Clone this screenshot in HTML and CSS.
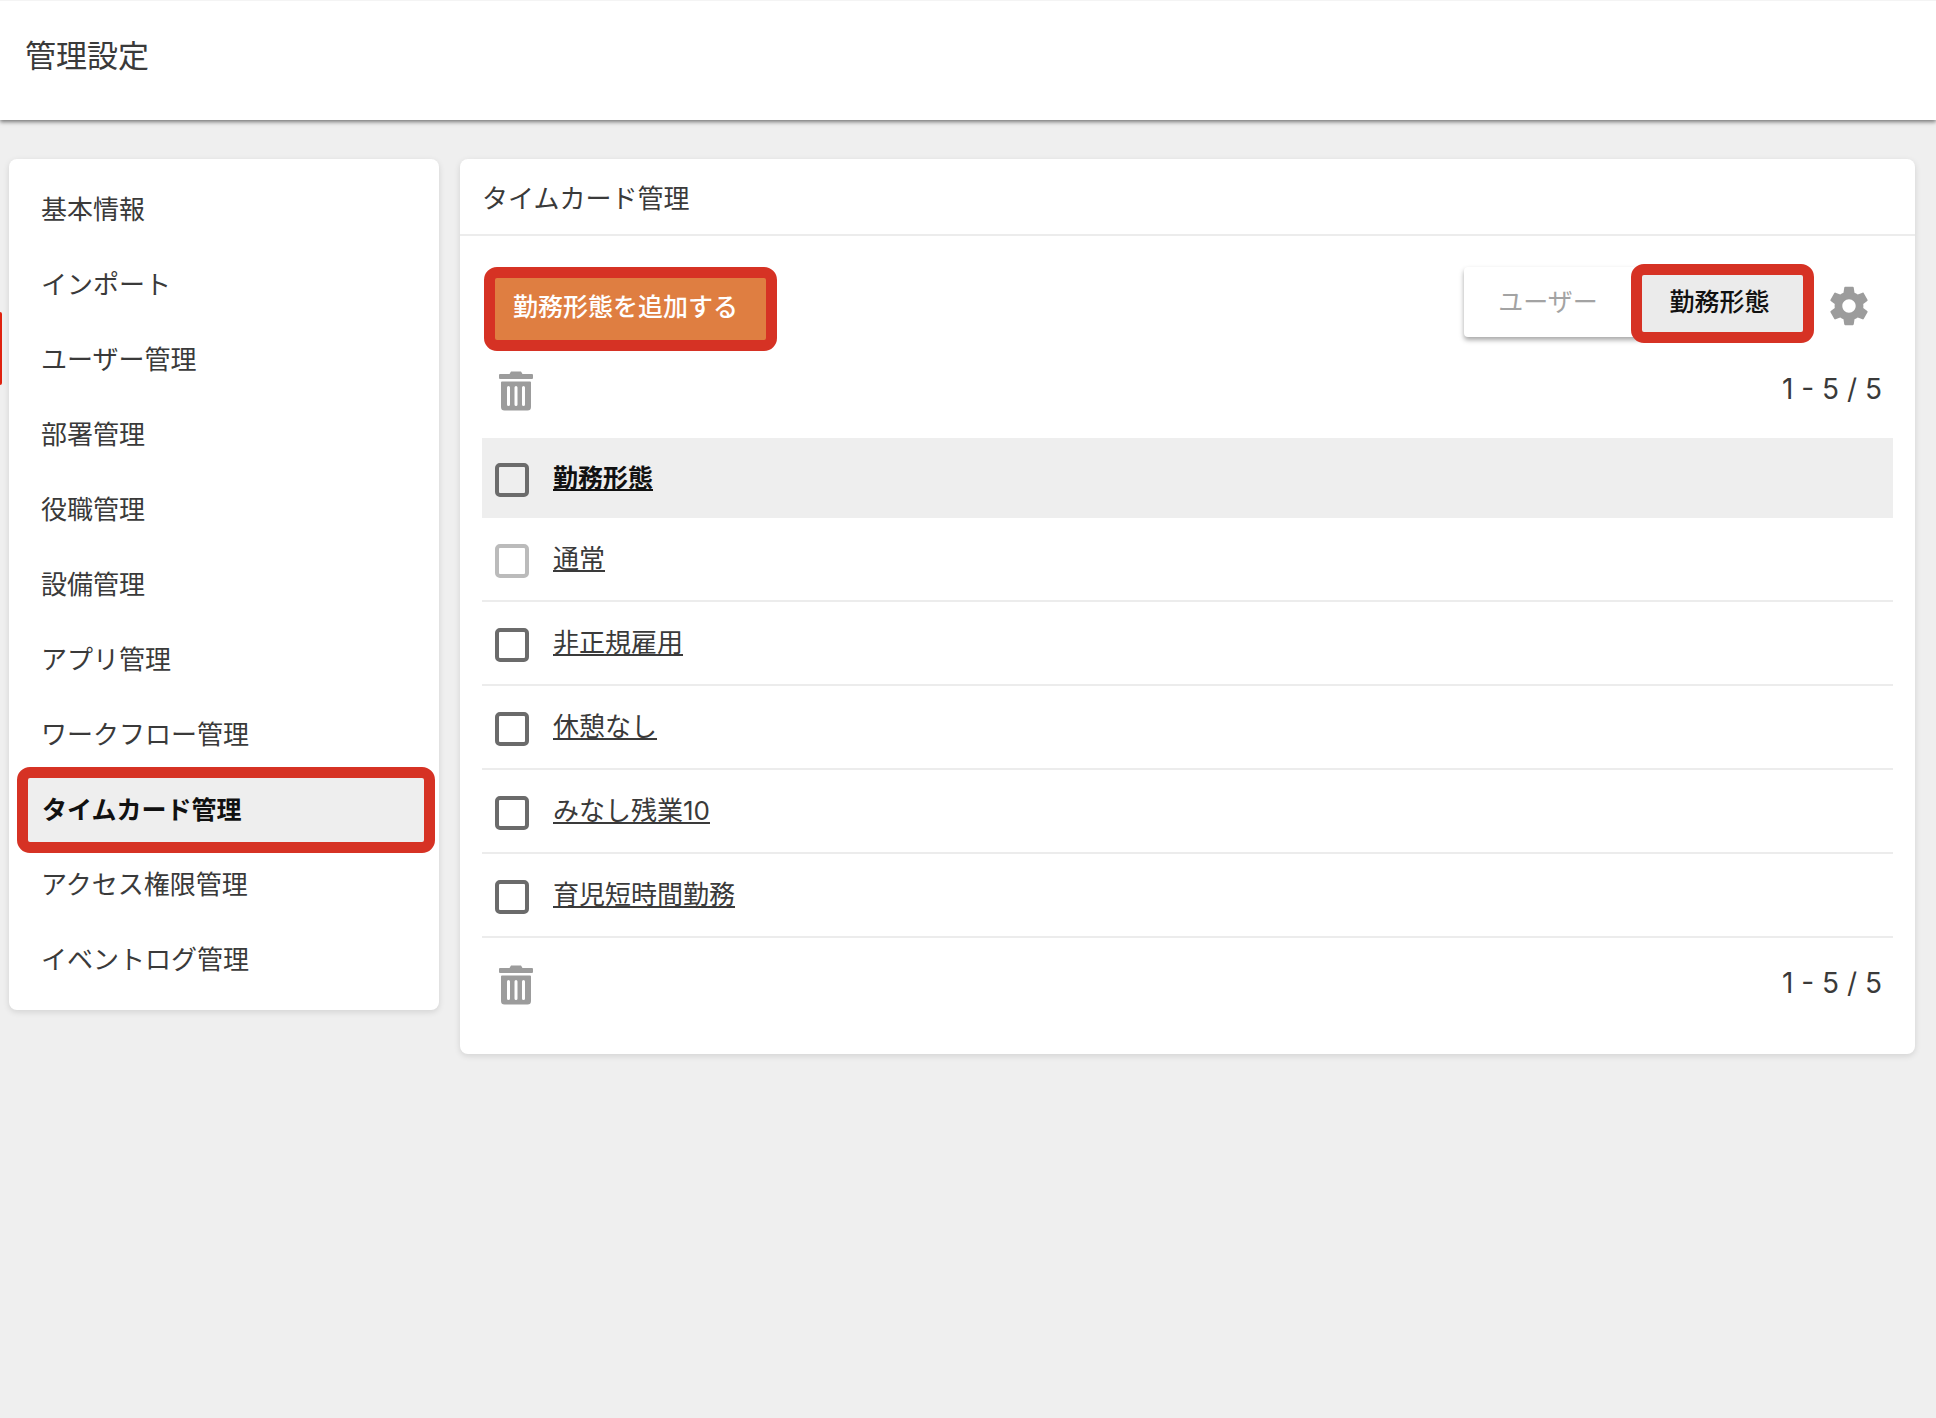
FILE: index.html
```
<!DOCTYPE html>
<html lang="ja">
<head>
    <meta charset="UTF-8">
    <meta name="viewport" content="width=device-width, initial-scale=1.0">
    <title>管理設定</title>
    <link rel="stylesheet" href="styles.css">
</head>
<body>
    <header class="page-header">
        <h1>管理設定</h1>
    </header>

    <div class="edge-marker"></div>

    <div class="layout">
        <nav class="card sidebar">
            <a href="#" class="menu-item">基本情報</a>
            <a href="#" class="menu-item">インポート</a>
            <a href="#" class="menu-item">ユーザー管理</a>
            <a href="#" class="menu-item">部署管理</a>
            <a href="#" class="menu-item">役職管理</a>
            <a href="#" class="menu-item">設備管理</a>
            <a href="#" class="menu-item">アプリ管理</a>
            <a href="#" class="menu-item">ワークフロー管理</a>
            <a href="#" class="menu-item active marked">タイムカード管理</a>
            <a href="#" class="menu-item">アクセス権限管理</a>
            <a href="#" class="menu-item">イベントログ管理</a>
        </nav>

        <main class="card content">
            <h2>タイムカード管理</h2>

            <div class="content-body">
                <div class="toolbar">
                    <button type="button" class="btn-add marked">勤務形態を追加する</button>
                    <div class="toolbar-right">
                        <button type="button" class="tab">ユーザー</button>
                        <button type="button" class="tab-active marked">勤務形態</button>
                        <button type="button" class="icon-btn btn-gear" aria-label="設定">
                            <svg class="icon-gear" viewBox="0 0 24 24"><path d="M19.43 12.98c.04-.32.07-.64.07-.98s-.03-.66-.07-.98l2.11-1.65c.19-.15.24-.42.12-.64l-2-3.46c-.12-.22-.39-.3-.61-.22l-2.49 1c-.52-.4-1.08-.73-1.69-.98l-.38-2.65C14.46 2.18 14.25 2 14 2h-4c-.25 0-.46.18-.49.42l-.38 2.65c-.61.25-1.17.59-1.69.98l-2.49-1c-.23-.09-.49 0-.61.22l-2 3.46c-.13.22-.07.49.12.64l2.11 1.65c-.04.32-.07.65-.07.98s.03.66.07.98l-2.11 1.65c-.19.15-.24.42-.12.64l2 3.46c.12.22.39.3.61.22l2.49-1c.52.4 1.08.73 1.69.98l.38 2.65c.03.24.24.42.49.42h4c.25 0 .46-.18.49-.42l.38-2.65c.61-.25 1.17-.59 1.69-.98l2.49 1c.23.09.49 0 .61-.22l2-3.46c.12-.22.07-.49-.12-.64l-2.11-1.65zM12 15.5c-1.93 0-3.5-1.57-3.5-3.5s1.57-3.5 3.5-3.5 3.5 1.57 3.5 3.5-1.57 3.5-3.5 3.5z"/></svg>
                        </button>
                    </div>
                </div>

                <div class="list-bar">
                    <button type="button" class="icon-btn" aria-label="削除">
                        <svg class="icon-trash" viewBox="0 0 34 40"><path fill-rule="evenodd" d="M1 3h9.500l1.500-2.500h10l1.500 2.500h9.500q1 0 1 1v3q0 1-1 1h-32q-1 0-1-1v-3q0-1 1-1zM3 10.500h28q1 0 1 1v24.500q0 3.500-3.500 3.500h-23q-3.500 0-3.500-3.500v-24.500q0-1 1-1zM9.500 15q-1.500 0-1.500 1.500v17q0 1.500 1.500 1.500t1.500-1.500v-17q0-1.500-1.500-1.500zM17 15q-1.500 0-1.500 1.500v17q0 1.500 1.500 1.500t1.500-1.500v-17q0-1.500-1.500-1.500zM24.500 15q-1.500 0-1.500 1.500v17q0 1.500 1.500 1.500t1.500-1.500v-17q0-1.500-1.500-1.500z"/></svg>
                    </button>
                    <span class="pager">1 - 5 / 5</span>
                </div>

                <table class="list">
                    <thead>
                        <tr>
                            <th class="check"><input type="checkbox" aria-label="すべて選択"></th>
                            <th><a href="#">勤務形態</a></th>
                        </tr>
                    </thead>
                    <tbody>
                        <tr>
                            <td class="check"><input type="checkbox" aria-label="通常" disabled></td>
                            <td><a href="#">通常</a></td>
                        </tr>
                        <tr>
                            <td class="check"><input type="checkbox" aria-label="非正規雇用"></td>
                            <td><a href="#">非正規雇用</a></td>
                        </tr>
                        <tr>
                            <td class="check"><input type="checkbox" aria-label="休憩なし"></td>
                            <td><a href="#">休憩なし</a></td>
                        </tr>
                        <tr>
                            <td class="check"><input type="checkbox" aria-label="みなし残業10"></td>
                            <td><a href="#">みなし残業10</a></td>
                        </tr>
                        <tr>
                            <td class="check"><input type="checkbox" aria-label="育児短時間勤務"></td>
                            <td><a href="#">育児短時間勤務</a></td>
                        </tr>
                    </tbody>
                </table>

                <div class="list-bar bottom">
                    <button type="button" class="icon-btn" aria-label="削除">
                        <svg class="icon-trash" viewBox="0 0 34 40"><path fill-rule="evenodd" d="M1 3h9.500l1.500-2.500h10l1.500 2.500h9.500q1 0 1 1v3q0 1-1 1h-32q-1 0-1-1v-3q0-1 1-1zM3 10.500h28q1 0 1 1v24.500q0 3.500-3.500 3.500h-23q-3.500 0-3.500-3.500v-24.500q0-1 1-1zM9.500 15q-1.500 0-1.500 1.500v17q0 1.500 1.500 1.500t1.500-1.500v-17q0-1.500-1.500-1.500zM17 15q-1.500 0-1.500 1.500v17q0 1.500 1.500 1.500t1.500-1.500v-17q0-1.500-1.500-1.500zM24.500 15q-1.500 0-1.500 1.500v17q0 1.500 1.500 1.500t1.500-1.500v-17q0-1.500-1.500-1.500z"/></svg>
                    </button>
                    <span class="pager">1 - 5 / 5</span>
                </div>
            </div>
        </main>
    </div>
</body>
</html>
```
FILE: styles.css
```
:root {
    --bg: #efefef;
    --text: #3a3a3a;
    --strong: #111;
    --line: #ececec;
    --gray: #9c9c9c;
    --orange: #df7e41;
    --red: #d63224;
}

* {
    margin: 0;
    padding: 0;
    box-sizing: border-box;
}

body {
    background: var(--bg);
    color: var(--text);
    font-family: Inter, "Noto Sans CJK JP", sans-serif;
    font-size: 26px;
    line-height: 38px;
    min-height: 100vh;
}

button {
    font-family: inherit;
    font-size: 25px;
    line-height: 38px;
    border: none;
    background: none;
    cursor: pointer;
}

.page-header {
    background: #fff;
    border-top: 1px solid #f4f4f4;
    padding: 31px 25px 40px;
    box-shadow: 0 2px 4px rgba(0, 0, 0, 0.5);
}

.page-header h1 {
    font-size: 31px;
    font-weight: 400;
    line-height: 48px;
}

/* highlight frame */
.marked {
    border: 11px solid var(--red);
    border-radius: 13px;
}

.edge-marker {
    position: absolute;
    left: 0;
    top: 312px;
    width: 2px;
    height: 73px;
    background: #e0220f;
    border-radius: 0 2px 2px 0;
}

.layout {
    display: flex;
    align-items: flex-start;
    gap: 21px;
    padding: 39px 21px 39px 9px;
}

.card {
    background: #fff;
    border-radius: 8px;
    box-shadow: 0 2px 6px rgba(0, 0, 0, 0.12);
}

.sidebar {
    flex: 0 0 430px;
    padding: 13px 0;
}

.menu-item {
    display: flex;
    align-items: center;
    height: 75px;
    padding: 0 32px;
    color: var(--text);
    text-decoration: none;
}

.menu-item.active {
    height: 86px;
    margin: -5px 4px -6px 8px;
    padding: 0 14px;
    background: #eee;
    color: var(--strong);
    font-size: 25px;
    font-weight: 700;
}

.content {
    flex: 1;
    min-width: 0;
}

.content h2 {
    padding: 21px 22px 16px;
    border-bottom: 2px solid var(--line);
    font-size: 26px;
    font-weight: 400;
}

.content-body {
    padding: 28px 22px 0;
}

.toolbar {
    display: flex;
    justify-content: space-between;
    align-items: flex-end;
}

.btn-add {
    height: 84px;
    margin-left: 2px;
    padding: 0 28px 4px 18px;
    background: var(--orange);
    color: #fff;
    font-weight: 500;
}

.toolbar-right {
    display: flex;
    align-items: center;
    height: 87px;
    padding: 0 21px 8px 0;
}

.tab {
    width: 178px;
    height: 70px;
    margin-bottom: 4px;
    padding-right: 10px;
    background: #fff;
    border-radius: 4px;
    box-shadow: 0 3px 5px rgba(0, 0, 0, 0.35);
    color: #a3a3a3;
}

.tab-active {
    position: relative;
    width: 183px;
    height: 79px;
    margin-left: -11px;
    padding: 0 6px 3px 0;
    background: #ebebeb;
    color: var(--strong);
    font-weight: 500;
}

.icon-btn {
    display: flex;
}

.icon-btn svg {
    fill: var(--gray);
}

.btn-gear {
    margin-left: 12px;
    padding-top: 4px;
}

.icon-gear {
    width: 46px;
    height: 46px;
}

.icon-trash {
    width: 34px;
    height: 40px;
}

.list-bar {
    display: flex;
    justify-content: space-between;
    align-items: flex-start;
    height: 87px;
    padding: 20px 11px 0 17px;
}

.list-bar.bottom {
    height: 116px;
    padding-top: 27px;
}

.pager {
    font-size: 28px;
    line-height: 36px;
}

.list {
    width: 100%;
    border-collapse: separate;
    border-spacing: 0;
    text-align: left;
}

.list th {
    height: 80px;
    background: #eee;
    font-size: 25px;
    font-weight: 700;
}

.list td {
    height: 84px;
    border-bottom: 2px solid var(--line);
}

.list .check {
    width: 71px;
    padding: 4px 0 0 13px;
}

.list a {
    color: inherit;
    text-decoration: underline;
    text-decoration-thickness: 2px;
    text-decoration-skip-ink: none;
    text-underline-offset: 2px;
}

.list th a {
    color: var(--strong);
}

.list input {
    appearance: none;
    display: block;
    width: 34px;
    height: 34px;
    border: 4px solid #6b6b6b;
    border-radius: 5px;
}

.list input:disabled {
    border-color: #bbb;
}
```
